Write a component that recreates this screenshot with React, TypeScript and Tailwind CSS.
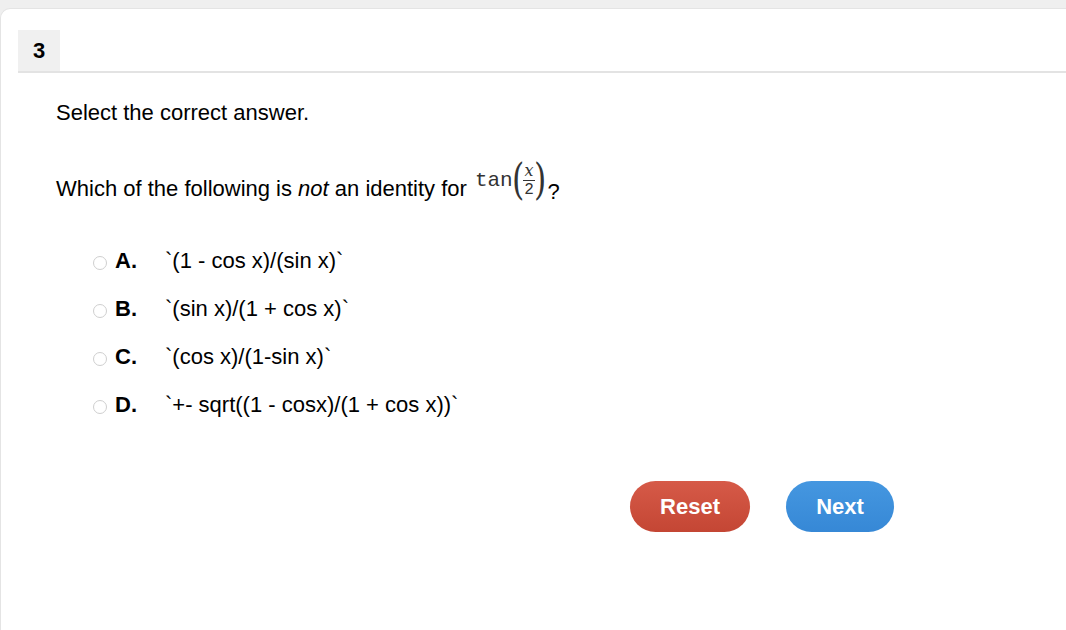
import React from 'react';

const options = [
    { key: 'A', text: '`(1 - cos x)/(sin x)`' },
    { key: 'B', text: '`(sin x)/(1 + cos x)`' },
    { key: 'C', text: '`(cos x)/(1-sin x)`' },
    { key: 'D', text: '`+- sqrt((1 - cosx)/(1 + cos x))`' },
];

function TanHalf() {
    return (
        <span className="relative top-[-9px] ml-[8px] inline-flex items-center text-[#333] [font-family:'Liberation_Mono',monospace]">
            <span className="text-[21px] leading-none">tan</span>
            <span className="-mx-[3px] scale-x-75 text-[42px] leading-none font-light [font-family:'DejaVu_Serif',serif]">(</span>
            <span className="flex flex-col items-center text-[16px] leading-none">
                <span className="italic [font-family:'DejaVu_Serif',serif]">x</span>
                <span className="my-[1px] h-px w-[12px] bg-[#333]" />
                <span>2</span>
            </span>
            <span className="-mx-[3px] scale-x-75 text-[42px] leading-none font-light [font-family:'DejaVu_Serif',serif]">)</span>
        </span>
    );
}

export default function App() {
    return (
        <div className="h-[630px] w-[1066px] overflow-hidden bg-[#efefef] pt-[8px] [font-family:'Liberation_Sans',Arial,sans-serif] text-black">
            <div className="h-full rounded-tl-[10px] border-t border-l border-[#e4e4e4] bg-white pt-[21px] pl-[17px]">
                <div className="flex border-b-2 border-[#e3e3e3]">
                    <div className="flex h-[41px] w-[42px] items-center justify-center bg-[#f0f0f0] text-[22px] font-bold">3</div>
                </div>

                <div className="pl-[38px]">
                    <p className="mt-[25px] text-[22px] leading-[30px]">Select the correct answer.</p>

                    <div className="mt-[46px] flex h-[30px] items-center text-[22px] leading-[30px]">
                        <span className="whitespace-pre">
                            Which of the following is <i>not</i> an identity for
                        </span>
                        <TanHalf />
                        <span className="relative top-[3px] ml-[2px]">?</span>
                    </div>

                    <div className="mt-[43px] flex flex-col gap-[22px] pl-[37px]">
                        {options.map((o) => (
                            <div key={o.key} className="flex h-[26px] items-center text-[22px]">
                                <span className="mt-[5px] h-[14px] w-[14px] rounded-full border border-[#cfcfcf] bg-white" />
                                <span className="ml-[8px] w-[50px] font-bold">{o.key}.</span>
                                <span>{o.text}</span>
                            </div>
                        ))}
                    </div>

                    <div className="mt-[64px] flex gap-[36px] pl-[574px]">
                        <button className="h-[51px] w-[120px] rounded-full bg-gradient-to-b from-[#d65a48] to-[#c44634] text-[22px] font-bold text-white">
                            Reset
                        </button>
                        <button className="h-[51px] w-[108px] rounded-full bg-gradient-to-b from-[#4597e0] to-[#3688d6] text-[22px] font-bold text-white">
                            Next
                        </button>
                    </div>
                </div>
            </div>
        </div>
    );
}
